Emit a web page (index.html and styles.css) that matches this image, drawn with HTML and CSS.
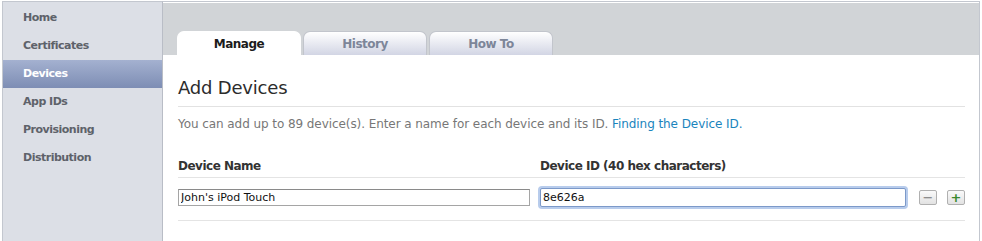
FILE: index.html
```html
<!DOCTYPE html>
<html lang="en">
<head>
  <meta charset="UTF-8">
  <title>Devices</title>
  <link rel="stylesheet" href="styles.css">
</head>
<body>

<div class="page">
  <nav class="sidebar">
    <a href="#">Home</a>
    <a href="#">Certificates</a>
    <a href="#" class="active">Devices</a>
    <a href="#">App IDs</a>
    <a href="#">Provisioning</a>
    <a href="#">Distribution</a>
  </nav>

  <div class="main">
    <div class="tabbar">
      <div class="tab current">Manage</div>
      <div class="tab">History</div>
      <div class="tab">How To</div>
    </div>

    <div class="content">
      <h1>Add Devices</h1>
      <p class="intro">You can add up to 89 device(s). Enter a name for each device and its ID. <a href="#">Finding the Device ID.</a></p>

      <div class="row heads">
        <div class="col-name">Device Name</div>
        <div class="col-id">Device ID (40 hex characters)</div>
      </div>

      <div class="row fields">
        <div class="col-name"><input type="text" class="name-input" value="John's iPod Touch"></div>
        <div class="col-id"><input type="text" class="id-input" value="8e626a"></div>
        <div class="btns">
          <button class="minus">&minus;</button>
          <button class="plus">+</button>
        </div>
      </div>
    </div>
  </div>
</div>

</body>
</html>
```

FILE: styles.css
```css
* {
  box-sizing: border-box;
  margin: 0;
  padding: 0;
}

body {
  font-family: 'Lucida Grande', 'DejaVu Sans', sans-serif;
  background: #fff;
  width: 982px;
  height: 241px;
  overflow: hidden;
}

.page {
  display: flex;
  height: 241px;
  padding: 1px 2px 0 2px;
}

.sidebar {
  width: 161px;
  flex: none;
  background: #dcdfe6;
  border-top: 1px solid #c3c7cf;
  border-left: 1px solid #c3c7cf;
  border-right: 1px solid #b9bdc6;
  padding-top: 2px;
}

.sidebar a {
  display: block;
  height: 28px;
  line-height: 28px;
  padding-left: 20px;
  font-size: 11px;
  font-weight: bold;
  letter-spacing: -0.5px;
  color: #5e626a;
  text-decoration: none;
}

.sidebar a.active {
  background: linear-gradient(#a4b1d0, #7d8db4);
  color: #fff;
}

.main {
  flex: 1;
  border-top: 1px solid #c3c7cf;
  border-right: 1px solid #c3c7cf;
  padding-top: 1px;
}

.tabbar {
  background: #d1d4d7;
  height: 52px;
  display: flex;
  align-items: flex-end;
  padding-left: 14px;
  gap: 2px;
}

.tab {
  width: 124px;
  height: 24px;
  border-radius: 7px 7px 0 0;
  border: 1px solid #c2c5cc;
  border-bottom: none;
  background: linear-gradient(#ffffff, #d2d5e4);
  text-align: center;
  line-height: 24px;
  font-size: 12px;
  font-weight: bold;
  letter-spacing: -0.5px;
  color: #7d8699;
}

.tab.current {
  background: #fff;
  border-color: #fff;
  color: #1c1c1c;
}

.content {
  padding: 0 14px 0 15px;
}

h1 {
  font-size: 18px;
  font-weight: normal;
  letter-spacing: -0.2px;
  color: #2c2c2c;
  padding-top: 22px;
  padding-bottom: 8px;
  border-bottom: 1px solid #e2e2e2;
}

.intro {
  font-size: 12px;
  letter-spacing: -0.07px;
  color: #777;
  padding-top: 10px;
  height: 48px;
}

.intro a {
  color: #1a84bd;
  text-decoration: none;
}

.row {
  display: flex;
  align-items: center;
}

.col-name {
  width: 362px;
}

.col-id {
  width: 372px;
}

.heads {
  font-size: 12px;
  font-weight: bold;
  letter-spacing: -0.5px;
  color: #333;
  height: 23px;
  border-bottom: 1px solid #e4e4e4;
}

.fields {
  height: 43px;
  align-items: flex-start;
  padding-top: 11px;
  border-bottom: 1px solid #e4e4e4;
}

input {
  display: block;
  font-family: 'Lucida Grande', 'DejaVu Sans', sans-serif;
  font-size: 11px;
  color: #111;
  height: 17px;
  padding: 0 2px;
  border: 1px solid #a5a5a5;
  border-top-color: #8a8a8a;
  outline: none;
}

.name-input {
  width: 352px;
}

.id-input {
  width: 366px;
  height: 19px;
  margin-top: -1px;
  border: 1px solid #7c99c9;
  box-shadow: 0 0 0 2px #b8ccec;
  border-radius: 2px;
}

.btns {
  display: flex;
  gap: 10px;
  margin-left: 7px;
  margin-top: 1px;
}

.btns button {
  width: 18px;
  height: 15px;
  border: 1px solid #b0b0b0;
  border-radius: 2px;
  background: linear-gradient(#fafafa, #e2e2e2);
  font-size: 13px;
  line-height: 12px;
  color: #777;
  font-family: 'DejaVu Sans', sans-serif;
}

.btns .plus {
  color: #3c8a2e;
  font-weight: bold;
}
```
